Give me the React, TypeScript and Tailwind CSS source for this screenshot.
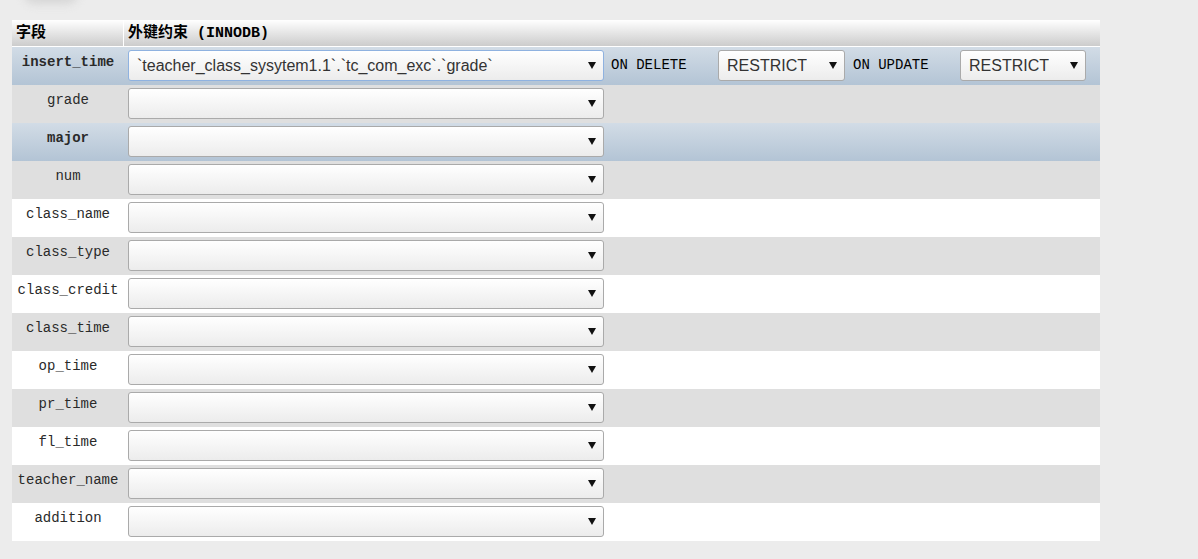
import { ReactNode } from 'react';

type Field = {
    name: string;
    marked?: boolean;
};

const fields: Field[] = [
    { name: 'insert_time', marked: true },
    { name: 'grade' },
    { name: 'major', marked: true },
    { name: 'num' },
    { name: 'class_name' },
    { name: 'class_type' },
    { name: 'class_credit' },
    { name: 'class_time' },
    { name: 'op_time' },
    { name: 'pr_time' },
    { name: 'fl_time' },
    { name: 'teacher_name' },
    { name: 'addition' },
];

const mono = "font-['Liberation_Mono','Noto_Sans_CJK_SC',monospace]";

const FakeSelect = ({ value, width, focused }: { value?: string; width: string; focused?: boolean }) => (
    <div
        className={`${width} h-[31px] shrink-0 flex items-center justify-between pl-[8px] pr-[7px] rounded-[3px] border bg-gradient-to-b from-white to-[#ececec] font-['Liberation_Sans',Arial,sans-serif] text-[16px] text-[#333] ${
            focused ? 'border-[#8fb2e0]' : 'border-[#aaa]'
        }`}
    >
        <span className="whitespace-nowrap truncate">{value}</span>
        <svg width="8" height="7" viewBox="0 0 8 7" className="shrink-0">
            <polygon points="0,0 8,0 4,7" fill="#111" />
        </svg>
    </div>
);

const Label = ({ children, width }: { children: ReactNode; width: string }) => (
    <div className={`${width} h-[31px] flex items-center shrink-0 ${mono} text-[14px] text-black whitespace-nowrap`}>
        {children}
    </div>
);

const Row = ({ field, index }: { field: Field; index: number }) => {
    const bg = field.marked
        ? 'bg-gradient-to-b from-[#d2dce6] to-[#b3c4d5]'
        : index % 2 === 0
          ? 'bg-white'
          : 'bg-[#dfdfdf]';
    const first = index === 0;
    return (
        <div className={`flex h-[38px] ${bg}`}>
            <div
                className={`w-[112px] shrink-0 text-center pt-[5px] ${mono} text-[14px] text-[#2a2a2a] ${
                    field.marked ? 'font-bold' : ''
                }`}
            >
                {field.name}
            </div>
            <div className="flex items-start pt-[3px] pl-[4px]">
                <FakeSelect
                    width="w-[476px]"
                    focused={first}
                    value={first ? '`teacher_class_sysytem1.1`.`tc_com_exc`.`grade`' : ''}
                />
                {first && (
                    <>
                        <Label width="w-[114px] pl-[7px]">ON DELETE</Label>
                        <FakeSelect width="w-[127px]" value="RESTRICT" />
                        <Label width="w-[115px] pl-[8px]">ON UPDATE</Label>
                        <FakeSelect width="w-[126px]" value="RESTRICT" />
                    </>
                )}
            </div>
        </div>
    );
};

const App = () => {
    return (
        <div className="min-h-[559px] w-[1198px] bg-[#ececec] overflow-hidden">
            {/* shadow of a button cut off at top */}
            <div className="h-[20px] relative">
                <div className="absolute left-[24px] -top-[16px] w-[54px] h-[20px] rounded-full bg-[#d6d6d6] blur-[4px]" />
            </div>
            <div className="ml-[12px] w-[1088px] bg-white">
                <div className="flex h-[27px] bg-gradient-to-b from-white to-[#cccccc] border-b border-white">
                    <div
                        className={`w-[112px] pl-[4px] pt-[3px] border-r border-white ${mono} font-bold text-[15px] text-black`}
                    >
                        字段
                    </div>
                    <div className={`pl-[4px] pt-[3px] ${mono} font-bold text-[15px] text-black`}>
                        外键约束 (INNODB)
                    </div>
                </div>
                {fields.map((field, i) => (
                    <Row key={field.name} field={field} index={i} />
                ))}
            </div>
        </div>
    );
};

export default App;
